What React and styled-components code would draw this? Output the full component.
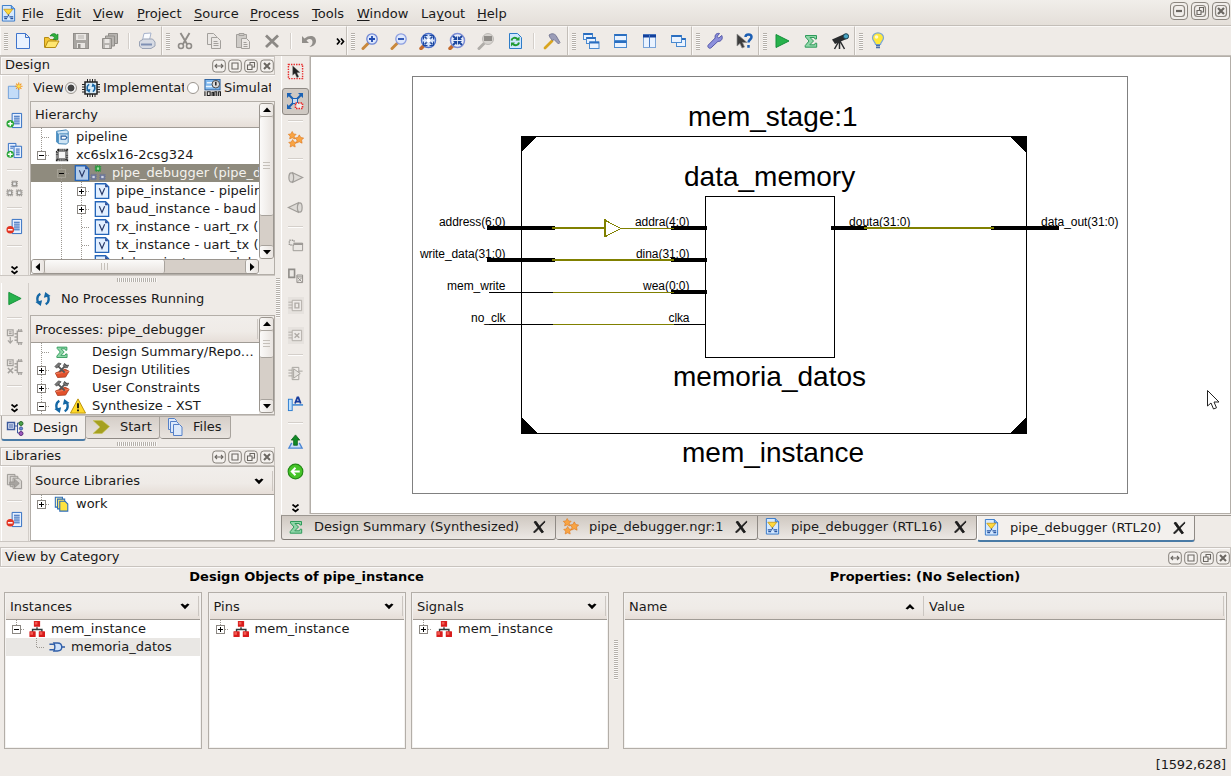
import React from "react";
import styled, { createGlobalStyle, css } from "styled-components";

const BG = "#efebe7";
const EDGE = "#b3aea8";
const SOFT = "#cbc6c1";

const Global = createGlobalStyle`
  html, body { margin: 0; padding: 0; background: ${BG}; }
  * { box-sizing: border-box; }
  body { font-family: "DejaVu Sans", sans-serif; font-size: 13px; color: #1a1a1a; overflow: hidden; }
`;

/* ---------- icons (18x18 grid) ---------- */

const page = (fill = "#e8f1ff", stroke = "#3a6fc4") => (
  <path d="M3.5 1.5h8l4 4v11h-12z" fill={fill} stroke={stroke} />
);
const lens = (ring, handle = "#c9883c") => (
  <>
    <path d="M2 16.5L7 11.5" stroke={handle} strokeWidth="3" strokeLinecap="round" />
    <circle cx="11" cy="7" r="5.2" fill="#dfe8fb" stroke={ring} strokeWidth="1.3" />
  </>
);
const sigma = (
  <path d="M3.500 3.500h11v3.500h-1.500l-.7-1.500H8L11.500 9l-3.700 3.800h4.700l.7-1.600h1.500v4h-11.500v-1.600L7 9 3.500 5z" fill="#8fd6a8" stroke="#2f9b5a" strokeWidth="1" />
);
const star = (x, y, s, k) => (
  <path key={k} transform={`translate(${x} ${y}) scale(${s})`} d="M0-4L1.500-1.400 4.200-1 2.200 1 2.700 4 0 2.700-2.700 3.900-2.200 1-4.200-1-1.500-1.400z" fill="#f8a444" stroke="#dd7418" strokeWidth=".6" />
);
const recycle = (c = "#1568a6") => (
  <g fill="none" stroke={c} strokeWidth="2.600">
    <path d="M6 3C2.500 5 2 9 3.500 13" />
    <path d="M12 15c3.500-2 4-6 2.500-10" />
    <path d="M.5 12.500L8 10.500 6.500 17zM17.500 5.500L10 7.500 11.500 1z" fill={c} stroke="none" />
  </g>
);
const chip = (x, y, w, c, fill = "#ececec") => (
  <g key={`${x}-${y}`} stroke={c}>
    <rect x={x - 1} y={y - 1} width={w + 2} height={w + 2} fill="none" strokeDasharray="1 1" strokeWidth="1.200" />
    <rect x={x} y={y} width={w} height={w} fill={fill} strokeWidth="1.300" />
  </g>
);
const schem = (
  <>
    <path d="M2.500.5h9.500l3.500 3.500v13h-13z" fill="#d5e9ff" stroke="#3477c8" />
    <path d="M12 .5v3.500h3.500" fill="#7eb1ee" stroke="#3477c8" />
    <path d="M4 4.500h9.500L8.800 10.500z" fill="#ffd93c" stroke="#c49513" strokeWidth=".8" />
    <path d="M9 10v2M4 12.500h4.500M10 12.500h4M4.500 14.500h3M11 14.500h3" stroke="#2754a0" strokeWidth="1.400" fill="none" />
  </>
);
const doc = (
  <>
    <path d="M6.500 1.500h10v15h-10z" fill="#e6f0ff" stroke="#2e6bc0" />
    <path d="M8.500 4.500h6M8.500 6.500h6M8.500 8.500h6M8.500 10.500h6M8.500 12.500h6" stroke="#1e58b0" />
  </>
);
const win = (x, y, w, h) => (
  <g key={`${x},${y}`}>
    <rect x={x} y={y} width={w} height={h} fill="#eaf3ff" stroke="#4a8ad0" />
    <path d={`M${x} ${y + 0.5}h${w}`} stroke="#2a6ec0" strokeWidth="2" />
  </g>
);
const tiny = (x, y) => (
  <g key={x}>
    <rect x={x} y={y} width="7" height="6.500" rx=".6" fill="#d81c1c" />
    <rect x={x + 1} y={y + 1} width="3" height="3" fill="#f25a52" />
  </g>
);
const blk = (inner) => (
  <g stroke="#b0aca7" fill="none">
    <rect x="1" y="0" width="17" height="18" fill="#e6e2de" stroke="none" />
    <path d="M5.500 3.500h10v11h-10zM1.500 5.500h4M1.500 8.500h4M1.500 11.500h4" fill="#eeebe8" />
    {inner}
  </g>
);
const vfile = (fill) => (
  <>
    <path d="M1.500 .8h11.500l3.500 3.500v13h-15z" fill={fill} stroke="#2565b8" strokeWidth="1.500" />
    <path d="M12.500 1v3.800h3.700z" fill="#2a4790" />
    <path d="M6 6l3 7 3-7" fill="none" stroke="#2a3a68" strokeWidth="1.300" />
  </>
);

const ICONS = {
  new: <path d="M2.500 1.500h9l4 4v11h-13z M11.500 1.500v4h4" fill="#e9f2ff" stroke="#3f74cc" />,
  open: <><path d="M1.500 15.500v-10h4l1.500 2h6v3" fill="#f4c534" stroke="#b58b12" /><path d="M2 15.500l3-6.500h11l-3.500 6.500z" fill="#ffe670" stroke="#b58b12" /><path d="M7 4c2-3 5-3 6.500-1l1.500-1v5.500H10l1.500-1.800c-1-1.700-2.500-2-4.500-1.700z" fill="#2fae3c" stroke="#157a22" strokeWidth=".6" /></>,
  save: <><rect x="1.500" y="1.500" width="15" height="15" fill="#a8a5a1" stroke="#918e8a" /><path d="M4 2h10v6H4zM5 11h8v5H5z" fill="#e9e6e3" /><path d="M6 4h6M6 6h6" stroke="#b5b2ae" /><path d="M6 12h2.500v4H6z" fill="#918e8a" /></>,
  saveAll: <g stroke="#918e8a" fill="#b7b4b0"><path d="M7.500 1.500h9v10h-9z" /><path d="M4.500 4h9v10h-9z" /><path d="M1.500 6.500h9v10h-9z" /><path d="M3.500 7h5v4h-5zM4 13h4v3H4z" fill="#e9e6e3" stroke="none" /></g>,
  print: <><path d="M4.500 8L6 1.500l7-.5-1.500 7z" fill="#fafcff" stroke="#a7b3cc" /><path d="M1.500 9.500l4-2.500h9l2.500 3v4l-4 2.500h-9l-2.500-2.500z" fill="#d7dbe4" stroke="#9aa3b5" /><path d="M3 12.500h11" stroke="#7f90b4" strokeWidth="2" /></>,
  cut: <g fill="none" stroke="#8f8c88"><path d="M4.500 1l6.500 11M13.500 1L7 12" strokeWidth="1.900" /><circle cx="5" cy="14" r="2.500" strokeWidth="1.600" /><circle cx="13" cy="14" r="2.500" strokeWidth="1.600" /></g>,
  copy: <g fill="#ebe8e5" stroke="#a3a09c"><path d="M2.500 1.500h6l3 3v8h-9z" /><path d="M6.500 5.500h6l3 3v8h-9z" /><path d="M8.500 9.500h4M8.500 11.500h5M8.500 13.500h5" /></g>,
  paste: <g fill="#cfccc8" stroke="#a3a09c"><path d="M2.500 2.500h10v13h-10z" /><path d="M5 1.500h5v2H5z" /><path d="M7.500 6.500h5l3 3v7h-8z" fill="#ebe8e5" /><path d="M9.500 10.500h3M9.500 12.500h4M9.500 14.500h4" /></g>,
  del: <path d="M3 3.500l12 11.500M15 3.500L3 15" stroke="#8c8985" strokeWidth="2.800" />,
  undo: <path d="M2 4v7h7L6.500 8.500c3-2.500 6-1.500 6 1.500 0 2-1 3.500-3 5 4-.5 6.500-3 6.500-6 0-5-6-7-11.500-2.500z" fill="#918e8a" />,
  zin: <>{lens("#6e86d4")}<path d="M8 7h6M11 4v6" stroke="#204bb0" strokeWidth="1.800" /></>,
  zout: <>{lens("#8c9ee0")}<path d="M8 7h6" stroke="#204bb0" strokeWidth="1.800" /></>,
  zfit: <><path d="M2 16.500L6 12.500" stroke="#c46a2c" strokeWidth="3.500" strokeLinecap="round" /><circle cx="9.500" cy="8.500" r="7" fill="#d9e6fb" stroke="#4c70c8" strokeWidth="1.500" /><path d="M5.500 4.500l8 8M13.500 4.500l-8 8" stroke="#1c479e" strokeWidth="1.600" /><path d="M4.500 7.500v-4h4M10.500 3.500h4v4M14.500 9.500v4h-4M8.500 13.500h-4v-4" fill="none" stroke="#1c479e" /><rect x="7.500" y="6.500" width="4" height="4" fill="#fff" /></>,
  zsel: <><path d="M2 16.500L6 12.500" stroke="#c46a2c" strokeWidth="3.500" strokeLinecap="round" /><circle cx="9.500" cy="8.500" r="7" fill="#e8edfa" stroke="#7b8cd4" strokeWidth="1.500" /><path d="M5 4l3 3M14 4l-3 3M5 13l3-3M14 13l-3-3" stroke="#1c479e" strokeWidth="2" /><path d="M5.500 7.500h3v-3M10.500 4.500v3h3M13.500 9.500h-3v3M8.500 12.500v-3h-3" fill="none" stroke="#1c479e" strokeWidth="1.200" /></>,
  zbox: <><path d="M2 16.500L7 11.500" stroke="#b0ada9" strokeWidth="3" strokeLinecap="round" /><circle cx="11" cy="7" r="5.500" fill="#d6d3cf" stroke="#bdbab6" /><rect x="7" y="4" width="8" height="5" fill="#8f8c88" /></>,
  refresh: <>{page("#cfe7ff", "#2e7cc8")}<g fill="none" stroke="#1f9a32" strokeWidth="2"><path d="M5.500 8.500c.5-3 4-3.500 6-1.500M13 10.500c-.5 3-4 3.500-6 1.500" /><path d="M13.500 4.500v4h-4zM5 14.500v-4h4z" fill="#1f9a32" stroke="none" /></g></>,
  hammer: <><path d="M2 16L9 9" stroke="#d9a520" strokeWidth="2.800" strokeLinecap="round" /><path d="M6 3c3-2 5-1.500 7 .5l4 7-1.500 1.500-4.500-4.500-1.500 1L7 5.500z" fill="#9b9db8" stroke="#6b6d8c" strokeWidth=".8" /></>,
  cascade: <>{win(1.5, 1.5, 9, 6)}{win(4.500, 5.500, 9, 6)}{win(7.500, 10, 9.500, 6.500)}</>,
  tileH: <>{win(3.500, 2.500, 12, 6)}{win(3.500, 9.500, 12, 6)}</>,
  tileV: <><rect x="3.500" y="2.500" width="12" height="13" fill="#eaf3ff" stroke="#7aa4d8" /><path d="M3 4h13" stroke="#12409c" strokeWidth="3" /><path d="M9.500 3v12" stroke="#4a7cc4" /></>,
  float: <>{win(7.500, 6.500, 9, 8)}{win(2.500, 3.500, 10, 7)}</>,
  wrench: <path d="M15.800 3.500l-3 2.500-1.800-1.500L13.500 1.500C10.500.8 8.500 3 9.200 6L2.300 13c-1.500 1.800 1 4.300 2.800 2.800L12 9.300c3 .6 5.200-2.500 3.800-5.800z" fill="#8d90dc" stroke="#5558a8" />,
  whats: <><path d="M2 2v12l3-2.500 2 4.500 2.500-1-2-4.500H12z" fill="#3c3c3c" stroke="#8c8c8c" strokeWidth=".7" /><path d="M10.500 5c0-3.500 6-3.500 6 0 0 2.500-3 2.500-3 5.500M13.500 13v2.800" fill="none" stroke="#1c5fb4" strokeWidth="2.500" /></>,
  run: <path d="M3 2.500L16 9 3 15.500z" fill="#27b24c" stroke="#14903a" />,
  sigma,
  scope: <g fill="#2a2c2e"><path d="M1 7.500L13.500 2l2 5L4 12z" /><path d="M8 9l-4.500 8M8.500 9v8M9 9l4.500 8" stroke="#2a2c2e" strokeWidth="1.500" /><circle cx="15" cy="4.300" r="2.600" fill="#49a5c4" stroke="#1d4250" /></g>,
  bulb: <><path d="M6.500 12.500C6.500 10 3.500 9 3.500 5.800a5.500 5 0 0 1 11 0c0 3.200-3 4.200-3 6.700z" fill="#ffe93b" stroke="#7aa6d6" strokeWidth="1.200" /><path d="M7 13.500h4M7 15.500h4" stroke="#4b6fa8" strokeWidth="1.600" /><circle cx="7.500" cy="5" r="1.800" fill="#fffbd0" /></>,
  newSrc: <><path d="M2.500 4.500h11v13h-11z" fill="#c3dcf8" stroke="#6f9ed8" /><g stroke="#f39a22" strokeWidth="1.200"><path d="M13.500.5v8M9.500 4.500h8M10.700 1.700l5.600 5.600M16.300 1.700l-5.600 5.600" /></g><circle cx="13.500" cy="4.500" r="1.600" fill="#ffe14a" /></>,
  addSrc: <>{doc}<circle cx="4.500" cy="12.500" r="4" fill="#2aa637" /><path d="M4.500 10v5M2 12.500h5" stroke="#fff" strokeWidth="1.500" /></>,
  addCopy: <><path d="M2.500 1.500h8v12h-8z" fill="#e6f0ff" stroke="#2e6bc0" /><path d="M8.500 4.500h8v12h-8z" fill="#e6f0ff" stroke="#2e6bc0" /><path d="M10.500 7.500h4M10.500 9.500h4M10.500 11.500h4M10.500 13.500h4M4.500 4.500h4M4.500 6.500h3" stroke="#1e58b0" /><circle cx="4.500" cy="13" r="3.800" fill="#2aa637" /><path d="M4.500 10.500v5M2 13h5" stroke="#fff" strokeWidth="1.400" /></>,
  hier: <>{chip(7, 2, 4, "#989591")}{chip(2, 11.500, 4, "#989591")}{chip(12, 11.500, 4, "#989591")}</>,
  remove: <>{doc}<circle cx="4.500" cy="12.500" r="4" fill="#e23422" /><path d="M2 12.500h5" stroke="#fff" strokeWidth="1.600" /></>,
  procDown: <g stroke="#a5a29e" fill="none"><path d="M1.500 2h6v6h-6zM3 4h3M3 6h3" strokeWidth="1.300" /><path d="M17.500 3.500h-5.500v12h5.500M9 6h3M9 9.500h3M9 13h3M13.500 1v2.500M16 1v2.500M13.500 15.500V18M16 15.500V18" strokeWidth="1.500" /><path d="M4.500 9.500v6M2 13l2.500 3L7 13" strokeWidth="1.300" /></g>,
  procX: <g stroke="#a5a29e" fill="none"><path d="M1.500 2h6v6h-6zM3 4h3M3 6h3" strokeWidth="1.300" /><path d="M17.500 3.500h-5.500v12h5.500M9 6h3M9 9.500h3M9 13h3M13.500 1v2.500M16 1v2.500M13.500 15.500V18M16 15.500V18" strokeWidth="1.500" /><path d="M2 10.500l5.500 5.500M7.500 10.500L2 16" strokeWidth="1.600" /></g>,
  libMove: <g stroke="#999692" fill="#d9d6d2"><path d="M1.500 1.500h8v11h-8z" /><path d="M4.500 3.500h8v11h-8z" /><path d="M7.500 5.500h6l3 3v8h-9z" /><path d="M4 9.500h5v-3l5 4.500-5 4.500v-3H4z" fill="#a7a4a0" /></g>,
  select: <><rect x="1.500" y="1.500" width="15" height="15" fill="none" stroke="#e62a2a" strokeWidth="1.500" strokeDasharray="1.500 1.200" /><path d="M6 3v10l2.500-2 2 4.500 2-1-2-4.300 3.300-.2z" fill="#222" stroke="#888" strokeWidth=".4" /></>,
  zoomArea: <><path d="M3 3l4.500 4.500M15 3l-4.500 4.500M3 15l4.500-4.500" stroke="#1b62b4" strokeWidth="2" /><path d="M1 1h5L1 6zM17 1v5L12 1zM1 17v-5l5 5z" fill="#1b62b4" /><rect x="6.500" y="6.500" width="5" height="5" fill="#c8dcf4" stroke="#1b62b4" /><rect x="9.500" y="11" width="7" height="5.500" fill="#eee" stroke="#e62a2a" strokeWidth="1.600" strokeDasharray="1.500 1" /></>,
  stars: <>{star(5.500, 4.500, 1, "a")}{star(13, 8.500, 1.1, "b")}{star(6, 13, 1, "c")}</>,
  coneR: <g fill="#dedbd7" stroke="#a19e9a" strokeWidth="1.300"><path d="M6 4l10.500 5L6 14z" /><ellipse cx="4.500" cy="9" rx="2.500" ry="5" /></g>,
  coneL: <g fill="#dedbd7" stroke="#a19e9a" strokeWidth="1.300"><path d="M12 4L1.500 9 12 14z" /><ellipse cx="13.500" cy="9" rx="2.500" ry="5" /></g>,
  hierUp: <g stroke="#9c9995" fill="#ebe8e4"><path d="M6.500 6.500h10v8h-10z" /><path d="M6 7.500h11" strokeWidth="2" /><path d="M2.500 3.500h5v5h-5z" strokeDasharray="1.500 1" strokeWidth="1.500" /></g>,
  hierDn: <g stroke="#908d89" fill="#ebe8e4"><path d="M2 2.500h6v8.500H2z" strokeWidth="1.700" /><path d="M10.500 8.500h6v8h-6zM10.500 10.500h6M11.500 11.500l4 4M15.500 11.500l-4 4" /></g>,
  blkA: blk(<path d="M8.500 6.500h4v5h-4z" strokeWidth="1.500" />),
  blkB: blk(<path d="M8 6.500l5 5M13 6.500l-5 5" strokeWidth="1.500" />),
  buf: <g stroke="#a5a19c" fill="none"><path d="M5.500 2.500h7v13h-7zM1.500 5.500h4M1.500 8.500h4M1.500 11.500h4M12.500 6.500h4" /><path d="M7 4l7 5-7 5z" fill="#e6e3df" /></g>,
  text: <><rect x="1.500" y="4.500" width="4" height="12" fill="#bfe2ff" stroke="#2b7cd0" /><path d="M6 10.500h11" stroke="#2b7cd0" strokeWidth="1.500" /><path d="M8.500 9L11 2.500h1L14.500 9M9.500 7h4" fill="none" stroke="#173c9c" strokeWidth="1.900" /></>,
  up: <><path d="M5 10.500L2 16h14l-3-5.500" fill="#c8dcf8" stroke="#4b86d4" strokeWidth="1.400" /><path d="M9 2L4.500 7.500H7V13h4V7.500h2.500z" fill="#118a26" stroke="#0b5e18" strokeWidth=".8" /></>,
  back: <><circle cx="9" cy="9" r="7.800" fill="#46c428" stroke="#228a14" strokeWidth="1.200" /><path d="M13.500 9H5.500M9 5L5 9l4 4" fill="none" stroke="#fff" strokeWidth="2" /></>,
  schem,
  proj: <><path d="M3 2.500l11-1.500 2 2v12l-2 2-9-.5-2-2z" fill="#cfe5f5" stroke="#2e78b0" /><path d="M3 3l2.500 2.500v11L3 14z" fill="#4a90c4" /><path d="M6 5.500h10" stroke="#2e78b0" /><path d="M8 8h5l1.500 1.500L13 11.500H8z" fill="#fff" stroke="#2b63a4" strokeWidth="1.300" /></>,
  device: <><path d="M5 3.500h9.500v11h-11v-9z" fill="#f3f3f3" stroke="#1c1c1c" strokeWidth="2.800" strokeDasharray="1.300 .9" /><rect x="5" y="5" width="8" height="8" fill="#f6f6f6" stroke="#555" strokeWidth=".7" /></>,
  vfile: vfile("#e2efff"),
  vfileSel: vfile("#b4cdea"),
  topMod: <>{chip(7, 2, 4, "#1d9a36", "#9fe0a4")}{chip(2, 11.500, 4, "#66729a", "#d2d6e4")}{chip(12, 11.500, 4, "#66729a", "#d2d6e4")}</>,
  impl: <><rect x="3" y="3" width="12" height="12" fill="#d8ecf8" stroke="#222" strokeWidth="1.500" /><path d="M5.500 0v3M8 0v3M10.500 0v3M13 0v3M5.500 15v3M8 15v3M10.500 15v3M13 15v3M0 5.500h3M0 8h3M0 10.500h3M0 13h3M15 5.500h3M15 8h3M15 10.500h3M15 13h3" stroke="#222" /><g transform="translate(3.600 3.600) scale(.6)">{recycle("#1665a4")}</g></>,
  simul: <><rect x="1" y=".5" width="16" height="11" fill="#7fb8ee" stroke="#2b5f9c" /><path d="M3 4h6M2 8h7" stroke="#e8f4ff" strokeWidth="1.500" /><circle cx="12.500" cy="5.500" r="4" fill="#dcdcdc" stroke="#444" /><path d="M12.500 3v4" stroke="#222" strokeWidth="1.600" /><path d="M1 18v-5M3.500 13.500h3v4h-3zM8.500 18v-4h1.500v4M11.500 18v-4.500h2V18M15.500 18v-4.500h2V18" fill="none" stroke="#222" strokeWidth="1.200" /></>,
  recycle: recycle(),
  tools: <><path d="M1.500 12.500l11-4.500 4.500 2.500-4 6.500-9 .5z" fill="#e2512c" stroke="#9c2e14" strokeWidth=".8" /><path d="M2 13l10-1.500 4.500-1" stroke="#f58a68" fill="none" /><path d="M4 4l8 8M14 3L6 11" stroke="#555" strokeWidth="2" /><path d="M1 5l4-4 3 1-5 5zM12 1.500l1.500 2.500 3-.5-1.500 3-3-.5-1.500-2z" fill="#777" stroke="#333" strokeWidth=".7" /></>,
  warn: <><path d="M9 1L17.500 17H.5z" fill="#ffd92a" stroke="#b58b00" strokeLinejoin="round" /><path d="M9 6v5.500M9 13v2" stroke="#111" strokeWidth="2" /></>,
  designTab: <g stroke="#3c5a9c" fill="#dfe8fa"><path d="M1.500 3.500h7v7h-7z" strokeWidth="1.400" /><path d="M3 6h4M3 8h4M8.500 7h3M11.500 4v10M11.500 4h2M11.500 14h2" fill="none" /><circle cx="15" cy="4.500" r="2" fill="#4ca34c" stroke="#2c6a2c" /><circle cx="15" cy="9.500" r="1.600" fill="#6a86d8" /><circle cx="15" cy="14.500" r="2" fill="#a05cc0" stroke="#5c2c7c" /></g>,
  startTab: <path d="M1 2.500h9L17.500 8.500 10 15.500H1L8 9z" fill="#a5a020" stroke="#c8c458" strokeWidth=".6" />,
  filesTab: <g fill="#dde9fa" stroke="#5580c8"><path d="M2.500.5h6l2 2v9h-8z" /><path d="M4.500 3.500h6l2 2v9h-8z" /><path d="M7.500 6.500h6l2.500 2.500v8.500H7.500z" /></g>,
  work: <><path d="M1.500 1.500h8v11h-8z" fill="#fff5b0" stroke="#2d6cb8" strokeWidth="1.200" /><path d="M4 3.500h8v11H4z" fill="#ffe96a" stroke="#2d6cb8" strokeWidth="1.200" /><path d="M6.500 6h6l3 3v8h-9z" fill="#ffe340" stroke="#2d6cb8" strokeWidth="1.200" /></>,
  net: <><path d="M9 7v3M4 12v-2.500h10.500V12" fill="none" stroke="#2c3a3a" strokeWidth="1.600" />{tiny(5.5, 0)}{tiny(0.5, 11.5)}{tiny(11, 11.5)}</>,
  gate: <><path d="M.5 6h5M.5 12h5M14 9h4" stroke="#2f5ea8" strokeWidth="1.600" /><path d="M5.500 4.500h4c6.500 0 6.500 9 0 9h-4c1.500-3 1.500-6 0-9z" fill="#cfe2fa" stroke="#2f5ea8" strokeWidth="1.500" /></>,
};

const Svg = styled.svg`
  display: block;
  flex: none;
`;
const Icon = ({ name, size = 18 }) => (
  <Svg width={size} height={size} viewBox="0 0 18 18">{ICONS[name]}</Svg>
);

/* ---------- frame ---------- */

const Window = styled.div`
  width: 1231px;
  height: 776px;
  display: flex;
  flex-direction: column;
  background: ${BG};
  overflow: hidden;
  white-space: nowrap;
`;
const MenuBar = styled.div`
  height: 26px;
  display: flex;
  align-items: center;
  background: linear-gradient(#f1eeea, #e4dfd9);
  border-bottom: 1px solid #c3beb8;
`;
const MenuItem = styled.span`
  width: ${(p) => p.$w}px;
  line-height: 24px;
  padding-top: 3px;
  u { text-underline-offset: 2px; text-decoration-thickness: 1px; }
`;
const AppIcon = styled.span`
  width: 22px;
  padding-top: 1px;
`;
const WindowButtons = styled.div`
  margin-left: auto;
  display: flex;
  gap: 3px;
  padding: 0 1px 4px 0;
`;
const ToolBar = styled.div`
  height: 30px;
  display: flex;
  border-bottom: 1px solid #c3beb8;
`;
const ToolGroup = styled.div`
  display: flex;
  align-items: center;
  width: ${(p) => (p.$w ? p.$w + "px" : "auto")};
  flex: ${(p) => (p.$w ? "none" : 1)};
  border-top: 1px solid #faf8f6;
  border-right: ${(p) => (p.$w ? "1px solid #c3beb8" : "none")};
  box-shadow: inset 1px 0 #faf8f6;
  padding: 0 1px 0 4px;
`;
const gripLines = (dir) => css`
  background: repeating-linear-gradient(${dir}, #b5b0aa 0 1px, #fbfaf9 1px 2px);
`;
const Grip = styled.i`
  width: 4px;
  height: 17px;
  flex: none;
  ${gripLines("to bottom")}
`;
const Tool = styled.span`
  width: ${(p) => (p.$v ? 28 : 29)}px;
  height: ${(p) => (p.$v ? 30 : 28)}px;
  flex: none;
  display: flex;
  align-items: center;
  justify-content: center;
`;
const Pressed = styled.span`
  width: 27px;
  height: 27px;
  display: flex;
  align-items: center;
  justify-content: center;
  border: 1px solid #8f8a85;
  border-radius: 3px;
  background: #cfc9c3;
`;
const ToolSep = styled.i`
  flex: none;
  width: 8px;
  display: flex;
  justify-content: center;
  &::before { content: ""; width: 1px; height: 16px; background: #d4cfca; box-shadow: 1px 0 #fdfcfb; }
`;
const StripSep = styled.i`
  flex: none;
  height: 8px;
  display: flex;
  align-items: center;
  &::before { content: ""; height: 1px; width: 15px; background: #d4cfca; box-shadow: 0 1px #fdfcfb; }
`;
const Strip = styled.div`
  width: ${(p) => p.$w || 28}px;
  flex: none;
  display: flex;
  flex-direction: column;
  align-items: center;
  border-right: 1px solid #d2cdc8;
  box-shadow: inset 1px 0 #fff;
  overflow: hidden;
`;
const Push = styled.i`
  flex: 1;
`;
const More = styled.span`
  padding-bottom: ${(p) => p.$b || 0}px;
`;
const Chevrons = ({ down }) => (
  <Svg width="9" height="9" viewBox="0 0 9 9">
    <path d={down ? "M1.500 .5l3 2.500 3-2.500M1.500 5l3 2.500L7.500 5" : "M1 1.500L3.500 4.500 1 7.500M5 1.500L7.500 4.500 5 7.500"} fill="none" stroke="#000" strokeWidth="1.700" />
  </Svg>
);

/* ---------- docks ---------- */

const Middle = styled.div`
  display: flex;
  height: 487px;
  flex: none;
`;
const LeftDock = styled.div`
  width: 275px;
  flex: none;
  display: flex;
  flex-direction: column;
`;
const DockTitle = styled.div`
  height: ${(p) => p.$h || 19}px;
  flex: none;
  display: flex;
  align-items: center;
  border: 1px solid #c8c3be;
  box-shadow: inset 1px 1px #fbf9f8, 0 1px #fbf9f8;
  padding: 0 0 0 4px;
  line-height: 17px;
`;
const TitleText = styled.span`
  flex: 1;
  padding-bottom: 2px;
`;
const TitleButtons = styled.span`
  display: flex;
  gap: 2px;
  padding: 1px 0.5px 0 0;
`;
const DOCK_GLYPHS = {
  wide: "M3.500 7h7M5 5L3 7l2 2M9 5l2 2-2 2",
  max: "M4 4h6v6H4z",
  restore: "M3.500 6h4.500v4.500H3.500zM6 6V3.500h4.500V8H8",
  close: "M4 4l6 6M10 4l-6 6",
};
const DockButton = ({ kind }) => (
  <Svg width="14" height="14" viewBox="0 0 14 14">
    <rect x=".7" y="1" width="12.600" height="12" rx="3" fill="#f4f1ee" stroke="#85807a" />
    <path d={DOCK_GLYPHS[kind]} fill="none" stroke="#6b6762" strokeWidth={kind === "close" ? 2 : 1.100} />
  </Svg>
);
const WIN_GLYPHS = {
  min: "M6 9h6",
  restore: "M6 8.500h4v4H6zM8.500 8V5.500h4V10H10.500",
  close: "M6 6l6 6M12 6l-6 6",
};
const WindowButton = ({ kind }) => (
  <Svg width="18" height="18" viewBox="0 0 18 18">
    <rect x=".5" y=".5" width="17" height="17" rx="3.500" fill="#f1eeeb" stroke="#8b867f" />
    <rect x="3.500" y="3.500" width="11" height="11" rx="3" fill="none" stroke="#8b867f" strokeWidth="1.200" />
    <path d={WIN_GLYPHS[kind]} fill="none" stroke="#6b6762" strokeWidth={kind === "restore" ? 1.100 : 2.200} />
  </Svg>
);
const Title = ({ children, h }) => (
  <DockTitle $h={h}>
    <TitleText>{children}</TitleText>
    <TitleButtons>
      {["wide", "max", "restore", "close"].map((k) => <DockButton key={k} kind={k} />)}
    </TitleButtons>
  </DockTitle>
);
const Pane = styled.div`
  display: flex;
  flex: none;
  height: ${(p) => p.$h}px;
  padding-left: 1px;
  border-bottom: 1px solid ${SOFT};
`;
const PaneBody = styled.div`
  flex: 1;
  min-width: 0;
  display: flex;
  flex-direction: column;
`;
const Splitter = styled.div`
  flex: none;
  height: ${(p) => p.$h}px;
  padding-left: ${(p) => p.$x || 0}px;
  display: flex;
  align-items: center;
  justify-content: ${(p) => (p.$x ? "flex-start" : "center")};
  &::before { content: ""; width: 40px; height: 4px; ${gripLines("to right")} }
`;
const SideSplitter = styled.div`
  width: ${(p) => p.$w}px;
  flex: none;
  display: flex;
  justify-content: center;
  padding-top: ${(p) => p.$y}px;
  &::before { content: ""; width: 4px; height: 40px; ${gripLines("to bottom")} }
`;
const ViewRow = styled.div`
  height: 26px;
  flex: none;
  display: flex;
  align-items: center;
  padding: 0 0 1px 4px;
`;
const Clip = styled.span`
  width: ${(p) => p.$w}px;
  padding-left: ${(p) => p.$pl || 0}px;
  overflow: hidden;
  flex: none;
`;
const Radio = styled.i`
  width: 12px;
  height: 12px;
  flex: none;
  margin: 0 ${(p) => p.$r}px 0 ${(p) => p.$l || 2}px;
  border: 1px solid #9a958f;
  border-radius: 50%;
  background: ${(p) => (p.$on ? "radial-gradient(#444 0 3px, #eee 3.800px)" : "#fff")};
`;
const Frame = styled.div`
  flex: ${(p) => (p.$w ? "none" : 1)};
  width: ${(p) => (p.$w ? p.$w + "px" : "auto")};
  min-height: 0;
  min-width: 0;
  display: flex;
  border: 1px solid ${EDGE};
  margin-left: ${(p) => p.$ml || 0}px;
  background: #fff;
`;
const ListCol = styled.div`
  flex: 1;
  min-width: 0;
  display: flex;
  flex-direction: column;
  overflow: hidden;
`;
const ListBody = styled.div`
  flex: 1;
  min-height: 0;
  overflow: hidden;
`;
const Header = styled.div`
  height: ${(p) => p.$h || 27}px;
  flex: none;
  display: flex;
  align-items: center;
  background: linear-gradient(#f1eeeb, #efebe7 60%, #e6ded8);
  border-bottom: 1px solid #a09b95;
`;
const HeadCell = styled.div`
  flex: ${(p) => (p.$w ? "none" : 1)};
  width: ${(p) => (p.$w ? p.$w + "px" : "auto")};
  height: 20px;
  line-height: 20px;
  display: flex;
  align-items: center;
  justify-content: space-between;
  padding: 1px 8px 0 ${(p) => p.$pl || 4}px;
  border-right: ${(p) => (p.$plain ? "none" : `1px solid ${SOFT}`)};
  margin-right: ${(p) => (p.$plain ? 0 : 1)}px;
`;
const Arrow = ({ up }) => (
  <Svg width="10" height="7" viewBox="0 0 10 7">
    <path d={up ? "M.5 5.500L5 1l4.500 4.500L7.500 6.500 5 4.500 2.500 6.500z" : "M.5 1.500l2-1L5 2.500 7.500.5l2 1L5 6.200z"} fill="#000" />
  </Svg>
);

/* ---------- trees ---------- */

const Row = styled.div`
  height: 18px;
  display: flex;
  align-items: center;
  background: ${(p) => (p.$sel ? "#8f8b7e" : p.$hover ? "#e9e7e4" : "transparent")};
  color: ${(p) => (p.$sel ? "#f4f2ee" : "inherit")};
`;
const RowText = styled.span`
  line-height: 17px;
  padding-bottom: 1px;
`;
const vDots = "repeating-linear-gradient(#9c9892 0 1px, transparent 1px 2px)";
const hDots = "repeating-linear-gradient(to right, #9c9892 0 1px, transparent 1px 2px)";
const Guide = styled.span`
  width: 20px;
  height: 18px;
  flex: none;
  display: flex;
  align-items: center;
  justify-content: center;
  background-image: ${(p) => [p.$k !== "none" && vDots, p.$k !== "line" && p.$k !== "none" && hDots].filter(Boolean).join(",") || "none"};
  background-repeat: no-repeat;
  background-position: 10px 0, 11px 9px;
  background-size: 1px ${(p) => (p.$last ? 9 : 18)}px, 8px 1px;
`;
const Toggle = styled.i`
  width: 9px;
  height: 9px;
  margin: 1px 0 0 1px;
  border: 1px solid ${(p) => (p.$sel ? "#a5a195" : "#8b8782")};
  background:
    linear-gradient(#000, #000) center / 5px 1px no-repeat,
    linear-gradient(#000, #000) center / 1px ${(p) => (p.$open ? 0 : 5)}px no-repeat,
    ${(p) => (p.$sel ? "#8f8b7e" : "#fff")};
`;
const IconSlot = styled.span`
  display: flex;
  flex: none;
  margin-left: 3px;
  width: ${(p) => p.$w || 22}px;
`;
const TreeRow = ({ guides = [], icons, slot, sel, hover, last, children }) => (
  <Row $sel={sel} $hover={hover}>
    {guides.map((g, i) => (
      <Guide key={i} $k={g} $last={last && i === guides.length - 1}>
        {(g === "plus" || g === "minus") && <Toggle $open={g === "minus"} $sel={sel} />}
      </Guide>
    ))}
    <IconSlot $w={slot}>{icons.map((n) => <Icon key={n} name={n} size={16} />)}</IconSlot>
    <RowText>{children}</RowText>
  </Row>
);

/* ---------- scroll bars ---------- */

const ScrollCol = styled.div`
  width: 15px;
  flex: none;
  display: flex;
  background: ${BG};
  padding: 1px 0 ${(p) => p.$corner || 1}px;
`;
const VBar = styled.div`
  width: 15px;
  flex: none;
  display: flex;
  flex-direction: column;
  background: #d6cfc8;
  border: 1px solid #9a958f;
  border-radius: 3px;
`;
const HBar = styled(VBar)`
  width: auto;
  height: 15px;
  flex-direction: row;
`;
const Knob = styled.span`
  flex: none;
  height: ${(p) => p.$h || 13}px;
  width: ${(p) => p.$w || 13}px;
  display: flex;
  align-items: center;
  justify-content: center;
  background: linear-gradient(${(p) => (p.$wide ? "to bottom" : "to right")}, #fbfaf9, #e9e4e0);
  border: solid #a8a39d;
  border-width: ${(p) => p.$bw || "0"};
  border-radius: 2px;
`;
const Tri = ({ d }) => (
  <Svg width="8" height="8" viewBox="0 0 8 8"><path d={d} fill="#000" /></Svg>
);
const ThumbMarks = styled.i`
  width: ${(p) => (p.$wide ? 8 : 7)}px;
  height: ${(p) => (p.$wide ? 7 : 8)}px;
  background: repeating-linear-gradient(${(p) => (p.$wide ? "to right" : "to bottom")}, #c5c0ba 0 1px, transparent 1px 3px);
`;
const VScroll = ({ thumb, corner }) => (
  <ScrollCol $corner={corner}>
    <VBar>
      <Knob $bw="0 0 1px"><Tri d="M4 1.500L8 6H0z" /></Knob>
      <Knob $h={thumb} $bw="0 0 1px"><ThumbMarks /></Knob>
      <Push />
      <Knob $bw="1px 0 0"><Tri d="M4 6.500L8 2H0z" /></Knob>
    </VBar>
  </ScrollCol>
);

/* ---------- tabs ---------- */

const LeftTabs = styled.div`
  display: flex;
  height: 25px;
  padding-left: 1px;
  flex: none;
`;
const SideTab = styled.div`
  width: ${(p) => p.$w}px;
  height: ${(p) => (p.$on ? 25 : 23)}px;
  display: flex;
  align-items: center;
  padding: 0 0 ${(p) => (p.$on ? 0 : 2)}px ${(p) => p.$pl}px;
  gap: ${(p) => p.$gap}px;
  border: 1px solid #a8a39d;
  border-top: ${(p) => (p.$on ? "none" : "1px solid #a8a39d")};
  border-bottom: ${(p) => (p.$on ? "2px solid #4a7ba6" : "1px solid #8f8a85")};
  border-left-width: ${(p) => (p.$on ? 1 : 0)}px;
  border-radius: 0 0 3px 3px;
  background: ${(p) => (p.$on ? "#f3f0ed" : "linear-gradient(#d5cec8, #e9e4df)")};
`;
const DocTabs = styled.div`
  height: 26px;
  display: flex;
  margin-top: 1px;
  flex: none;
  border-top: 1px solid #9c9791;
`;
const DocTab = styled.div`
  width: ${(p) => p.$w}px;
  height: ${(p) => (p.$on ? 26 : 24)}px;
  flex: none;
  display: flex;
  align-items: center;
  padding: 0 ${(p) => (p.$on ? 8 : 9)}px ${(p) => (p.$on ? 1 : 2)}px ${(p) => p.$pl}px;
  border: 1px solid #8f8a85;
  border-top: none;
  border-left-color: ${(p) => (p.$on ? "#fff" : "#8f8a85")};
  border-left-width: ${(p) => (p.$first || p.$on ? 1 : 0)}px;
  border-bottom: ${(p) => (p.$on ? "2px solid #4a7ba6" : "1px solid #7f7a75")};
  border-radius: 0 0 3px 3px;
  background: ${(p) => (p.$on ? "#f3f0ed" : "linear-gradient(#cfc8c1, #ece8e4)")};
`;
const TabText = styled.span`
  flex: 1;
  padding-left: ${(p) => p.$pl}px;
`;
const TabClose = () => (
  <Svg width="14" height="14" viewBox="0 0 14 14">
    <path d="M2 2l2-.7L11.500 12l-1.800.8zM12.500 1.200l.5.8L3 12.500l-1.500-.5z" fill="#1c1c1c" stroke="#1c1c1c" strokeWidth=".9" />
  </Svg>
);

/* ---------- document area ---------- */

const Center = styled.div`
  flex: 1;
  min-width: 0;
  display: flex;
  flex-direction: column;
`;
const CenterTop = styled.div`
  display: flex;
  height: 458px;
  flex: none;
`;
const Canvas = styled.div`
  flex: 1;
  background: #fff;
  border: 1px solid ${EDGE};
`;
const OLIVE = "#808000";
const Sch = styled.svg`
  display: block;
  font-family: "Liberation Sans", Arial, sans-serif;
  shape-rendering: crispEdges;
`;
const LABELS = [
  ["address(6:0)", 439, 226, 66.5], ["write_data(31:0)", 420, 258, 85.5], ["mem_write", 447, 290, 58.5], ["no_clk", 471, 322, 34.5],
  ["addra(4:0)", 635, 226, 54.5], ["dina(31:0)", 636, 258, 53.5], ["wea(0:0)", 643, 290, 46.500], ["clka", 668.500, 322, 21],
  ["douta(31:0)", 849, 226, 61.5], ["data_out(31:0)", 1041, 226, 77.5],
];
const TITLES = [
  ["mem_stage:1", 688, 126], ["data_memory", 684, 186], ["memoria_datos", 673, 386], ["mem_instance", 682, 462],
];
const BLACK_WIRES = [
  [487, 226, 68, 4], [487, 258, 68, 4], [489, 292, 64, 1], [489, 324, 64, 1],
  [671, 226, 36, 4], [671, 258, 36, 4], [671, 290, 36, 4], [674, 324, 31, 1],
  [831, 226, 36, 4], [991, 226, 68, 4],
];
const OLIVE_WIRES = [
  [552, 227, 53, 2], [604, 219, 2, 18], [621, 228, 53, 1], [552, 259, 122, 2],
  [553, 292, 121, 1], [553, 324, 121, 1], [864, 227, 130, 2],
];
const Schematic = () => (
  <Sch width="919" height="456" viewBox="311 57 919 456">
    <rect x="412.500" y="76.500" width="715" height="417" fill="none" stroke="#808080" />
    {TITLES.map(([t, x, y]) => <text key={t} x={x} y={y} fontSize="28">{t}</text>)}
    {LABELS.map(([t, x, y, w]) => <text key={t} x={x} y={y} fontSize="12" textLength={w} lengthAdjust="spacing">{t}</text>)}
    <rect x="521.500" y="136.500" width="505" height="297" fill="none" stroke="#000" />
    <rect x="705.500" y="196.500" width="129" height="161" fill="none" stroke="#000" />
    <path d="M521 136h17l-17 16zM1027 136h-18l18 17zM521 434h18l-18-17zM1027 434h-18l18-17z" />
    {BLACK_WIRES.map(([x, y, w, h]) => <rect key={`${x}-${y}`} x={x} y={y} width={w} height={h} />)}
    {OLIVE_WIRES.map(([x, y, w, h]) => <rect key={`${x}-${y}`} x={x} y={y} width={w} height={h} fill={OLIVE} />)}
    <path d="M605.500 220.500l15.500 8-15.500 8" fill="none" stroke={OLIVE} />
    <path d="M1207.500 390.500v15.500l3.500-3 2.500 6 3-1.200-2.500-5.800h5z" fill="#fff" stroke="#222" shapeRendering="auto" />
  </Sch>
);

/* ---------- bottom dock ---------- */

const Bottom = styled.div`
  display: flex;
  flex-direction: column;
  flex: 1;
  margin-top: 4px;
`;
const Headings = styled.div`
  display: flex;
  height: 25px;
  font-weight: bold;
  line-height: 19px;
  text-align: center;
  color: #000;
`;
const Heading = styled.div`
  width: ${(p) => p.$w}px;
  padding-left: ${(p) => p.$pl || 0}px;
`;
const Lists = styled.div`
  display: flex;
  height: 157px;
  padding-left: 4px;
`;
const Inner = styled.div`
  flex: 1;
  display: flex;
  flex-direction: column;
  border: 1px solid #f4f2f0;
  border-width: 0 1px 1px;
`;
const Status = styled.div`
  height: 28px;
  line-height: 31px;
  text-align: right;
  padding-right: 5px;
  letter-spacing: -0.2px;
`;
const StatusLine = styled.div`
  height: 32px;
  flex: none;
  display: flex;
  align-items: center;
  gap: 10px;
  padding: 0 0 1px 6px;
`;

const MENU = [["F", "ile", 34], ["E", "dit", 37], ["V", "iew", 44], ["P", "roject", 57], ["S", "ource", 56], ["P", "rocess", 62], ["T", "ools", 45], ["W", "indow", 64], ["y", "out", 56, "La"], ["H", "elp", 40]];

const Tools = ({ items }) => items.map((n, i) => (n === "|" ? <ToolSep key={i} /> : <Tool key={i}><Icon name={n} /></Tool>));
const VTools = ({ items }) =>
  items.map((n, i) =>
    n === "|" ? <StripSep key={i} /> : (
      <Tool key={i} $v>{n === "zoomArea" ? <Pressed><Icon name={n} /></Pressed> : <Icon name={n} size={17} />}</Tool>
    )
  );

export default function App() {
  return (
    <Window>
      <Global />
      <MenuBar>
        <AppIcon><Icon name="schem" size={17} /></AppIcon>
        {MENU.map(([key, rest, w, lead]) => (
          <MenuItem key={key + rest} $w={w}>{lead}<u>{key}</u>{rest}</MenuItem>
        ))}
        <WindowButtons>
          {["min", "restore", "close"].map((k) => <WindowButton key={k} kind={k} />)}
        </WindowButtons>
      </MenuBar>

      <ToolBar>
        <ToolGroup $w={162}><Grip /><Tools items={["new", "open", "save", "saveAll", "|", "print"]} /></ToolGroup>
        <ToolGroup $w={185}><Grip /><Tools items={["cut", "copy", "paste", "del", "|", "undo"]} /><Push /><Chevrons /></ToolGroup>
        <ToolGroup $w={221}><Grip /><Tools items={["zin", "zout", "zfit", "zsel", "zbox", "refresh", "|", "hammer"]} /></ToolGroup>
        <ToolGroup $w={124}><Grip /><Tools items={["cascade", "tileH", "tileV", "float"]} /></ToolGroup>
        <ToolGroup $w={67}><Grip /><Tools items={["wrench", "whats"]} /></ToolGroup>
        <ToolGroup $w={96}><Grip /><Tools items={["run", "sigma", "scope"]} /></ToolGroup>
        <ToolGroup><Grip /><Tools items={["bulb"]} /></ToolGroup>
      </ToolBar>

      <Middle>
        <LeftDock>
          <Title h={19}>Design</Title>
          <Pane $h={201}>
            <Strip>
              <VTools items={["newSrc", "addSrc", "addCopy", "|", "hier", "|", "remove", "|"]} />
              <Push /><More><Chevrons down /></More>
            </Strip>
            <PaneBody>
              <ViewRow>
                <Clip $w={30}>View</Clip><Radio $on $r={5} /><Icon name="impl" />
                <Clip $w={84} $pl={3}>Implementation</Clip><Radio $l={3} $r={5} /><Icon name="simul" size={17} />
                <Clip $w={50} $pl={3}>Simulation</Clip>
              </ViewRow>
              <Frame $ml={1}>
                <ListCol>
                  <Header $h={26}><HeadCell $plain>Hierarchy</HeadCell></Header>
                  <ListBody>
                    <TreeRow guides={["stub"]} icons={["proj"]}>pipeline</TreeRow>
                    <TreeRow guides={["minus"]} last icons={["device"]}>xc6slx16-2csg324</TreeRow>
                    <TreeRow guides={["none", "minus"]} sel icons={["vfileSel", "topMod"]} slot={38}>pipe_debugger (pipe_debugger</TreeRow>
                    <TreeRow guides={["none", "line", "plus"]} icons={["vfile"]}>pipe_instance - pipeline</TreeRow>
                    <TreeRow guides={["none", "line", "plus"]} icons={["vfile"]}>baud_instance - baud</TreeRow>
                    <TreeRow guides={["none", "line", "stub"]} icons={["vfile"]}>rx_instance - uart_rx (</TreeRow>
                    <TreeRow guides={["none", "line", "stub"]} icons={["vfile"]}>tx_instance - uart_tx (</TreeRow>
                    <TreeRow guides={["none", "line", "stub"]} icons={["vfile"]}>debug_instance - debug</TreeRow>
                  </ListBody>
                  <HBar>
                    <Knob $bw="0 1px 0 0"><Tri d="M1.500 4L6 0v8z" /></Knob>
                    <Knob $w={120} $wide $bw="0 1px 0 0"><ThumbMarks $wide /></Knob>
                    <Push />
                    <Knob $bw="0 0 0 1px"><Tri d="M6.500 4L2 0v8z" /></Knob>
                  </HBar>
                </ListCol>
                <VScroll thumb={99} corner={15} />
              </Frame>
            </PaneBody>
          </Pane>
          <Splitter $h={7} $x={117} />
          <Pane $h={133}>
            <Strip>
              <VTools items={["run", "|", "procDown", "procX", "|"]} />
              <Push /><More $b={2}><Chevrons down /></More>
            </Strip>
            <PaneBody>
              <StatusLine><Icon name="recycle" size={16} />No Processes Running</StatusLine>
              <Frame $ml={1}>
                <ListCol>
                  <Header><HeadCell>Processes: pipe_debugger</HeadCell></Header>
                  <ListBody>
                    <TreeRow guides={["stub"]} icons={["sigma"]} slot={38}>Design Summary/Repo…</TreeRow>
                    <TreeRow guides={["plus"]} icons={["tools"]} slot={38}>Design Utilities</TreeRow>
                    <TreeRow guides={["plus"]} icons={["tools"]} slot={38}>User Constraints</TreeRow>
                    <TreeRow guides={["minus"]} icons={["recycle", "warn"]} slot={38}>Synthesize - XST</TreeRow>
                  </ListBody>
                </ListCol>
                <VScroll thumb={27} />
              </Frame>
            </PaneBody>
          </Pane>
          <LeftTabs>
            <SideTab $on $w={85} $pl={4} $gap={9}><Icon name="designTab" />Design</SideTab>
            <SideTab $w={74} $pl={6} $gap={10}><Icon name="startTab" />Start</SideTab>
            <SideTab $w={71} $pl={6} $gap={9}><Icon name="filesTab" />Files</SideTab>
          </LeftTabs>
          <Splitter $h={6} $x={117} />
          <Title h={19}>Libraries</Title>
          <Pane $h={76}>
            <Strip><VTools items={["libMove", "|", "remove"]} /></Strip>
            <PaneBody>
              <Frame $ml={1}>
                <ListCol>
                  <Header $h={28}><HeadCell>Source Libraries<Arrow /></HeadCell></Header>
                  <ListBody><TreeRow guides={["plus"]} last icons={["work"]}>work</TreeRow></ListBody>
                </ListCol>
              </Frame>
            </PaneBody>
          </Pane>
        </LeftDock>
        <SideSplitter $w={6} $y={222} />
        <Center>
          <CenterTop>
            <Strip $w={29}>
              <VTools items={["select", "zoomArea", "|", "stars", "|", "coneR", "coneL", "|", "hierUp", "hierDn", "blkA", "blkB", "|", "buf", "text", "|", "up", "back"]} />
              <Push /><More $b={1}><Chevrons down /></More>
            </Strip>
            <Canvas><Schematic /></Canvas>
          </CenterTop>
          <DocTabs>
            <DocTab $first $w={275} $pl={5}><Icon name="sigma" /><TabText $pl={9}>Design Summary (Synthesized)</TabText><TabClose /></DocTab>
            <DocTab $w={202} $pl={6}><Icon name="stars" size={17} /><TabText $pl={10}>pipe_debugger.ngr:1</TabText><TabClose /></DocTab>
            <DocTab $w={219} $pl={6}><Icon name="schem" size={17} /><TabText $pl={10}>pipe_debugger (RTL16)</TabText><TabClose /></DocTab>
            <DocTab $on $w={218} $pl={5}><Icon name="schem" size={17} /><TabText $pl={10}>pipe_debugger (RTL20)</TabText><TabClose /></DocTab>
          </DocTabs>
        </Center>
      </Middle>

      <Bottom>
        <Title h={20}>View by Category</Title>
        <Headings><Heading $w={613}>Design Objects of pipe_instance</Heading><Heading $w={618} $pl={6}>Properties: (No Selection)</Heading></Headings>
        <Lists>
          {["Instances", "Pins", "Signals"].map((name, i) => (
            <Frame key={name} $w={198} $ml={i ? 5.500 : 0}>
              <Inner>
                <Header><HeadCell>{name}<Arrow /></HeadCell></Header>
                <ListBody>
                  <TreeRow guides={[i ? "plus" : "minus"]} last icons={["net"]}>mem_instance</TreeRow>
                  {i === 0 && <TreeRow guides={["none", "stub"]} last hover icons={["gate"]}>memoria_datos</TreeRow>}
                </ListBody>
              </Inner>
            </Frame>
          ))}
          <SideSplitter $w={14} $y={48} />
          <Frame $w={604}>
            <Inner>
              <Header>
                <HeadCell $w={299} $pl={4}>Name<Arrow up /></HeadCell>
                <HeadCell>Value</HeadCell>
              </Header>
            </Inner>
          </Frame>
        </Lists>
        <Status>[1592,628]</Status>
      </Bottom>
    </Window>
  );
}
